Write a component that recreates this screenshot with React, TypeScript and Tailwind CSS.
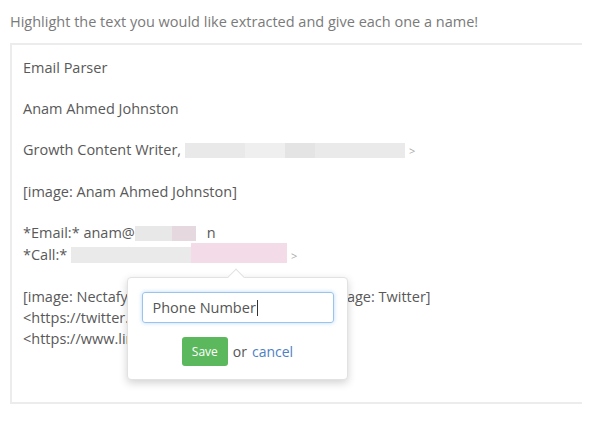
import React from "react";

function Blur({ w, c, h = 15 }: { w: number; c: string; h?: number }) {
  return (
    <span
      className="inline-block align-[-3px]"
      style={{ width: w, height: h, backgroundColor: c }}
    />
  );
}

export default function App() {
  return (
    <div className="relative w-[595px] h-[421px] overflow-hidden bg-white font-['Open_Sans',sans-serif]">
      {/* instructions */}
      <p className="pl-[10px] pt-[12px] text-[14.5px] leading-[20px] text-[#7a7a7a]">
        Highlight the text you would like extracted and give each one a name!
      </p>

      {/* email body */}
      <div className="mt-[11px] ml-[10px] w-[572px] h-[361px] border-2 border-r-0 border-[#ececec] pl-[11px] pt-[12px] text-[14.5px] leading-[21px] text-[#595959]">
        <p className="mb-[20px]">Email Parser</p>
        <p className="mb-[20px]">Anam Ahmed Johnston</p>
        <p className="mb-[20px] whitespace-nowrap">
          Growth Content Writer,{" "}
          <Blur w={60} c="#e9e9e9" />
          <Blur w={40} c="#efefef" />
          <Blur w={30} c="#e4e4e4" />
          <Blur w={90} c="#eaeaea" />
          <span className="ml-[4px] text-[11px] text-[#aaa]">&gt;</span>
        </p>
        <p className="mb-[20px]">[image: Anam Ahmed Johnston]</p>
        <p className="whitespace-nowrap">
          *Email:* anam@
          <Blur w={37} c="#e8e8e8" />
          <Blur w={24} c="#e6d8df" />
          <span className="inline-block w-[11px]" />n
        </p>
        <p className="mb-[20px] whitespace-nowrap">
          *Call:*{" "}
          <Blur w={120} c="#eaeaea" h={16} />
          <Blur w={96} c="#f3dce8" h={20} />
          <span className="ml-[4px] text-[11px] text-[#aaa]">&gt;</span>
        </p>
        <p className="whitespace-nowrap">
          [image: Nectafy Logo] &lt;https://nectafy.com&gt; [image: Twitter]
        </p>
        <p className="whitespace-nowrap">&lt;https://twitter.com/nectafy&gt;</p>
        <p className="whitespace-nowrap">&lt;https://www.linkedin.com/company/&gt;</p>
      </div>

      {/* name popover */}
      <div className="absolute left-[127px] top-[277px] w-[221px] h-[103px] rounded-[4px] border border-[#e2e2e2] bg-white shadow-[0_3px_8px_rgba(0,0,0,0.18)]">
        <div className="absolute -top-[7px] left-[102px] h-[12px] w-[12px] rotate-45 border-l border-t border-[#e2e2e2] bg-white" />
        <div className="relative flex flex-col items-center pt-[14px]">
          <div className="flex h-[31px] w-[192px] items-center rounded-[3px] border border-[#9cc3ec] pl-[10px] text-[14.5px] text-[#555] shadow-[0_0_4px_rgba(102,175,233,0.45)]">
            Phone Number
            <span className="ml-[1px] inline-block h-[16px] w-px bg-[#333]" />
          </div>
          <div className="mt-[14px] flex items-center gap-[5px] text-[14px]">
            <button className="h-[29px] w-[46px] rounded-[3px] bg-[#5cb85c] text-[12px] text-white">
              Save
            </button>
            <span className="text-[#555]">or</span>
            <span className="text-[#4f7fc4]">cancel</span>
          </div>
        </div>
      </div>
    </div>
  );
}
